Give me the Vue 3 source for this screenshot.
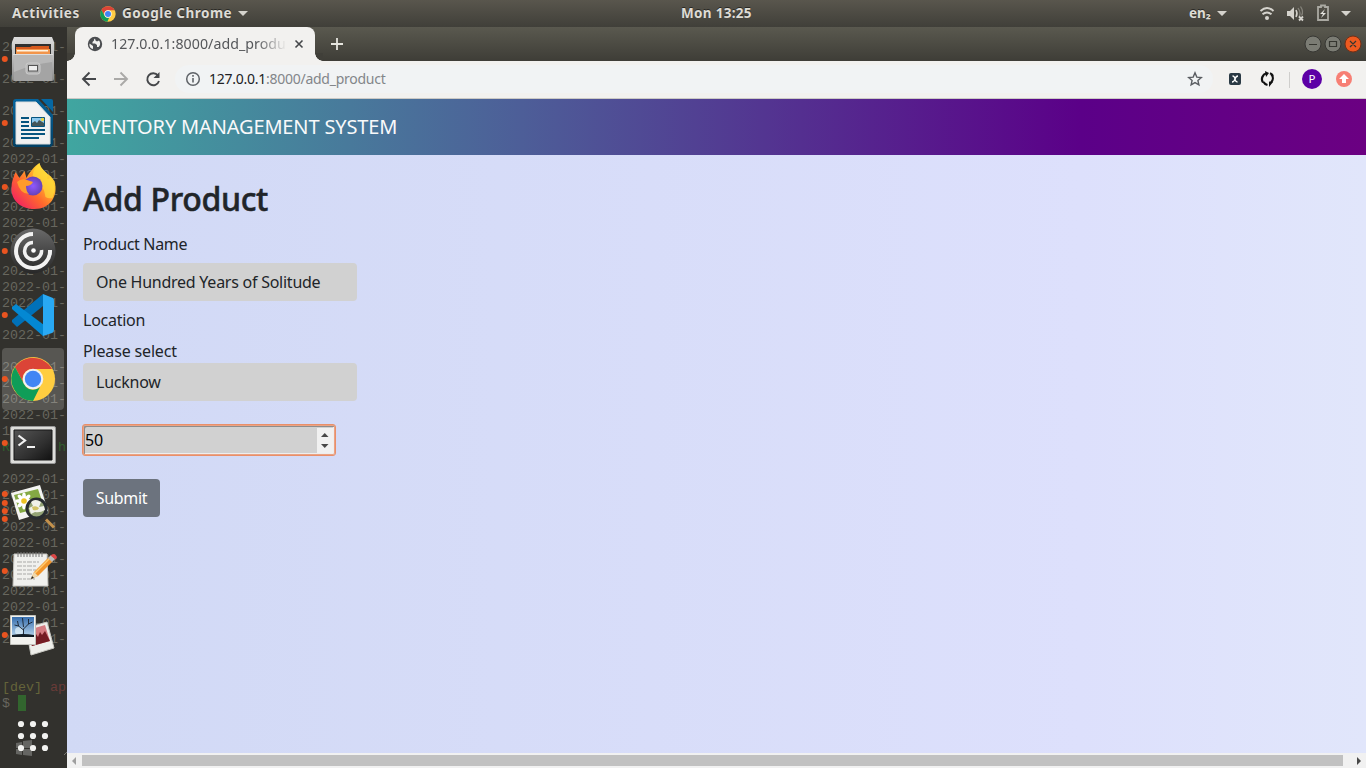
<script setup>
const lines = []
const blank = [63, 95, 127, 255, 319, 351, 463, 655, 671]
for (let y = 47; y <= 703; y += 16) {
  let text = '2022-01-'
  if (blank.includes(y)) text = ''
  if (y === 431) text = '1'
  if (y === 447) text = 'R      h'
  if (y === 703) text = '$ '
  lines.push({ y, text })
}
const dots = [59, 123, 187, 251, 315, 379, 443, 494, 503, 511, 519, 571, 635]
const grid = [0, 1, 2].flatMap(r => [0, 1, 2].map(c => ({ x: 21 + c * 12, y: 724 + r * 12 })))
const petals = [0, 45, 90, 135, 180, 225, 270, 315]
</script>

<template>
  <div class="desktop">
    <header class="topbar">
      <span class="activities">Activities</span>
      <svg class="mini" width="16" height="16" viewBox="0 0 48 48">
        <circle cx="24" cy="24" r="23" fill="#fc4" />
        <path d="M4 12A23 23 0 0 1 44 13H24A11 11 0 0 0 14 29Z" fill="#db4437" />
        <path d="M4 12L14 29A11 11 0 0 0 28 34L22 47A23 23 0 0 1 4 12Z" fill="#0f9d58" />
        <circle cx="24" cy="24" r="11" fill="#fff" /><circle cx="24" cy="24" r="9" fill="#4285f4" />
      </svg>
      <span class="appname">Google Chrome</span>
      <i class="caret"></i>
      <span class="clock">Mon 13:25</span>
      <span class="lang">en₂</span>
      <svg class="tray" width="140" height="27" viewBox="0 0 140 27">
        <g fill="#d5d3cd">
          <path d="M2 11h10l-5 5zM126 11h10l-5 5z" />
          <circle cx="52" cy="18" r="2" />
          <path d="M72 11h3l4-4v13l-4-4h-3z" />
        </g>
        <g fill="none" stroke="#d5d3cd" stroke-width="1.900">
          <path d="M45.500 11Q52 5 58.500 11M47.500 14.300Q52 10.500 56.500 14.300" />
          <path d="M81 10q2 3.500 0 7" stroke-width="1.500" />
          <path d="M83 8q3.500 5 1 9M85.500 6.500q3.500 5 1 9" stroke="#85837b" stroke-width="1.300" />
          <path d="M84 16.500l4 4m0-4l-4 4" stroke-width="1.800" />
          <path d="M106 7h-3v13h10V7h-3V5.500h-4z" stroke="#aaa9a2" stroke-width="1.800" />
        </g>
        <path d="M110 9l-5 5h3l-2 4 5-5h-3z" fill="#e5e4df" />
      </svg>
    </header>

    <div class="workspace">
      <aside class="dock">
        <pre class="terminal"><span v-for="l in lines" :key="l.y" :class="{ green: l.y === 447, dev: l.y === 687 }"><template v-if="l.y === 687">[dev] <b>ap</b></template><template v-else>{{ l.text }}<i v-if="l.y === 703" class="cursor"></i></template></span></pre>
        <svg class="launchers" width="67" height="741" viewBox="0 27 67 741">
          <defs>
            <linearGradient id="metal" x2="0" y2="1"><stop stop-color="#ddd" /><stop offset=".4" stop-color="#c1c1c1" /><stop offset="1" stop-color="#8c8c8c" /></linearGradient>
            <linearGradient id="fire" x1="1" x2="0" y2="1"><stop stop-color="#fff44f" /><stop offset=".3" stop-color="#ffc02c" /><stop offset=".58" stop-color="#ff6a2c" /><stop offset="1" stop-color="#ed0b72" /></linearGradient>
            <linearGradient id="citrix" x2="0" y2="1"><stop stop-color="#6a6a6a" /><stop offset=".55" stop-color="#444" /><stop offset="1" stop-color="#282828" /></linearGradient>
            <linearGradient id="screen" x2="1" y2="1"><stop stop-color="#555" /><stop offset=".6" stop-color="#303030" /><stop offset="1" stop-color="#111" /></linearGradient>
            <linearGradient id="writer" x2="0" y2="1"><stop stop-color="#06649d" /><stop offset="1" stop-color="#024064" /></linearGradient>
            <linearGradient id="sky" x2="0" y2="1"><stop stop-color="#376eae" /><stop offset="1" stop-color="#b8d6ed" /></linearGradient>
            <radialGradient id="violet"><stop stop-color="#9059ff" /><stop offset="1" stop-color="#6542b8" /></radialGradient>
          </defs>
          <rect x="2" y="348" width="62" height="62" rx="4" fill="#fff" fill-opacity=".18" />
          <circle v-for="y in dots" :key="y" cx="4.800" :cy="y" r="3" fill="#e95420" />

          <!-- files -->
          <path d="M14 37h38l2 5v37q0 2-2 2H14q-2 0-2-2V42z" fill="url(#metal)" />
          <path d="M15 44h36v12H15z" fill="#303030" />
          <path d="M16 47h14l2-1h17v9H16z" fill="#d65a1e" /><path d="M16 49h34v6H16z" fill="#f2954b" /><path d="M17 50h31v1.500H17z" fill="#fff2df" />
          <path d="M14 54h38v26q0 1-1 1H15q-1 0-1-1z" fill="#a4a4a4" /><path d="M14 54h38v8q-19 2-38 10z" fill="#b8b8b8" /><path d="M13 54.500h40" stroke="#ddd" />
          <rect x="26" y="63" width="14" height="11" rx="2.500" fill="#b4b4b4" stroke="#cdcdcd" />
          <rect x="28.500" y="65.500" width="9" height="5.500" fill="#eee" stroke="#555" />

          <!-- writer -->
          <path d="M13 102q0-3 3-3h22l15 16v28q0 4-4 4H16q-3 0-3-3z" fill="url(#writer)" />
          <path d="M41 99h10q2 0 2 2v11z" fill="#0667a2" />
          <path d="M16 102h20l14 15v27H16z" fill="#f1f1f1" stroke="#ddd" />
          <path d="M21 118h8M21 122h8M21 126h8M21 130h24M21 134h24M21 138h18" stroke="#06547f" stroke-width="2" />
          <path d="M31.500 117.500h13v9h-13z" fill="#8cc8ee" stroke="#06547f" /><path d="M32 126v-3l3-2 2 2 2-3 5 3v3z" fill="#44565a" /><circle cx="42.500" cy="119.500" r="1.700" fill="#ead340" />

          <!-- firefox -->
          <path d="M39.500 163c1 5 5 8 8 11 4 2 5 5 7 7 4 15-4 28-20 28-15 0-24-10-23-22 0-5 2-10 4-15l4 6 5-7 2 7c3-6 8-12 13-15z" fill="url(#fire)" />
          <path d="M39.500 163c1 5 5 8 8 11v5l3-1q7 8 2 20-4 1-7-1-1-12-12-17-3-9 6-17z" fill="#ffdd3a" opacity=".65" />
          <circle cx="33" cy="186" r="9.500" fill="url(#violet)" />
          <path d="M17 182q4-4 10-2l6 2q-2 4-7 4 0 5 3 8-9 0-12-12z" fill="#ff9b2b" />

          <!-- citrix -->
          <circle cx="33" cy="251" r="22.500" fill="url(#citrix)" />
          <g fill="none" stroke="#f2f2f2"><path d="M33 234A17 17 0 1 0 50 250" stroke-width="4" /><path d="M33 242.500A8.500 8.500 0 1 0 41.500 250" stroke-width="3.500" /></g><circle cx="33.500" cy="250.500" r="2.300" fill="#fff" />

          <!-- vscode -->
          <path d="M43 294v12L17 327l-5-5v-2z" fill="#0071b9" />
          <path d="M12 307l4-3 28 21-1 11-31-27z" fill="#0488d3" />
          <path d="M43 294l10 4q1 1 1 3v29q0 2-2 3l-9 3z" fill="#29a9f4" />

          <!-- chrome -->
          <circle cx="33" cy="379" r="22" fill="#ffcd40" />
          <path d="M15 367A22 22 0 0 1 52 369H33A10 10 0 0 0 24 384Z" fill="#db4437" />
          <path d="M15 367L24 384A10 10 0 0 0 40 387L33 401A22 22 0 0 1 15 367Z" fill="#0f9d58" />
          <circle cx="33" cy="379" r="10.300" fill="#f1f1f1" /><circle cx="33" cy="379" r="8.200" fill="#4285f4" />

          <!-- terminal -->
          <rect x="10.500" y="426.500" width="45" height="37" rx="1.500" fill="#dededb" stroke="#999" />
          <path d="M14 430h38v30H14z" fill="url(#screen)" stroke="#161616" />
          <path d="M18.500 435.500l6.500 5-6.500 5M27 447h8" fill="none" stroke="#f2f2f2" stroke-width="2.200" />

          <!-- viewer -->
          <path d="M11 493l29-8 8 26-29 9z" fill="#f4f4f2" />
          <path d="M14 495l24-6 6 18-24 6z" fill="#84a944" />
          <g fill="#fff"><ellipse v-for="a in petals" :key="a" cx="24" cy="496.500" rx="1.900" ry="4" :transform="`rotate(${a} 24 501)`" /></g><circle cx="24" cy="501" r="2.800" fill="#edc324" />
          <path d="M44 517l5 5" stroke="#35312b" stroke-width="4" /><path d="M46 519.500l8 8" stroke="#c5924c" stroke-width="3" />
          <circle cx="36.500" cy="508.500" r="9.500" fill="#93a375" stroke="#282c30" stroke-width="3" />
          <path d="M31 502q4-4 10 0l-2 5 5-1 1 4q-5 3-10 2l-4 2-2-6 4-2z" fill="#f0f1e9" /><path d="M32 507q4-2 7 1-1 3-6 2z" fill="#d2c365" />

          <!-- editor -->
          <path d="M14 554h33l1 32H13z" fill="#f0f0ed" stroke="#c6c5c0" />
          <path d="M17 562h22M17 566h19M17 570h22M17 574h15M17 579h18" stroke="#a9a9a7" stroke-dasharray="5 1 3 1" />
          <path d="M18 552v5M21 552v5M24 552v5M27 552v5M30 552v5M33 552v5M36 552v5M39 552v5M42 552v5" stroke="#777" />
          <path d="M31 579l3-7 15-15 4 4-15 15z" fill="#f2962c" /><path d="M35 573l15-15" stroke="#ffcb70" stroke-width="1.500" /><path d="M31 579l3-7 4 4z" fill="#eed8ad" /><path d="M31 579l1-3 2 2z" fill="#222" />
          <path d="M48 558l3-3 4 4-3 3z" fill="#bbb" /><path d="M50.500 555.500q3-3 5.500 0 2 2-.5 4z" fill="#dd4646" />

          <!-- photos -->
          <path d="M26 628l21-6 7 26-23 7z" fill="#eeeeea" stroke="#c8c8c2" />
          <path d="M28 630l17-5 5 16-18 5z" fill="#d57c82" /><path d="M29 640l4-4 2 2 1-4 2 3 2-5 2 3 3-4 5 10-18 5z" fill="#741c23" />
          <path d="M10.500 615.500h25v29h-25z" fill="#f2f2ee" stroke="#c2c2bc" /><path d="M12 617h22v20H12z" fill="url(#sky)" /><circle cx="19" cy="631" r="4" fill="#e4f3fb" opacity=".7" />
          <path d="M23.500 636v-7m0 1l-5-4-4-1m4 1l-1-5m6 8l5-5 4-2m-4 2v-5m-5 8l-1-9" stroke="#17202b" fill="none" stroke-width=".9" /><path d="M12 635q11-2 22 0v2H12z" fill="#111b24" />

          <!-- app grid -->
          <path d="M16 743l6-1v6h-6zM23 741l9-1v8h-9zM16 749h6v6l-6-1zM23 749h9v7l-9-1z" fill="#656562" />
          <path d="M64 755l3-3" stroke="#777670" />
          <circle v-for="(p, i) in grid" :key="i" :cx="p.x" :cy="p.y" r="3.100" fill="#f2f2f0" />
        </svg>
      </aside>

      <main class="window">
        <div class="tabs">
          <div class="tab">
            <svg width="16" height="16" viewBox="0 0 16 16"><circle cx="8" cy="8" r="7.200" fill="#4b4d50" /><path d="M2.500 7.500L6 10v3l-1.500-.5Q2 11 2.500 7.500zM8 2.500q-1.500 1-1 2L5.500 6v1.500H8L10 9v2h1.500l1-1q1.500-3-.5-5.500l-2 1L8.500 4.500z" fill="#f2f1ef" /></svg>
            <span class="tabtitle">127.0.0.1:8000/add_produ</span>
            <svg class="close" width="10" height="10" viewBox="0 0 10 10"><path d="M1.500 1.500l7 7m0-7l-7 7" stroke="#45474a" stroke-width="1.600" /></svg>
          </div>
          <svg class="plus" width="12" height="12" viewBox="0 0 12 12"><path d="M6 0v12M0 6h12" stroke="#e6e5df" stroke-width="1.800" /></svg>
          <svg class="controls" width="60" height="20" viewBox="0 0 60 20">
            <g fill="#7b7c74" stroke="#373733"><circle cx="10" cy="10" r="8" /><circle cx="30" cy="10" r="8" /><circle cx="50" cy="10" r="8" fill="#ee5a20" stroke="#732f16" /></g>
            <path d="M6 10.500h8M26.500 7.500h7v5h-7zM47 7l6 6m0-6l-6 6" fill="none" stroke="#353630" stroke-width="1.200" />
          </svg>
        </div>
        <div class="toolbar">
          <svg class="nav" width="94" height="38" viewBox="0 0 94 38" fill="none" stroke-width="1.900">
            <path d="M29 18H16m6.500-6.500L16 18l6.500 6.500" stroke="#45474a" />
            <path d="M47 18h13m-6.500-6.500L60 18l-6.500 6.500" stroke="#aaa9a7" />
            <path d="M91 14.500A6 6 0 1 0 92 20" stroke="#45474a" /><path d="M92.500 11v6h-6z" fill="#45474a" />
          </svg>
          <div class="address">
            <svg width="16" height="16" viewBox="0 0 16 16"><circle cx="8" cy="8" r="6.300" fill="none" stroke="#5f6368" stroke-width="1.500" /><path d="M8 7v4.500M8 4v1.700" stroke="#5f6368" stroke-width="1.600" /></svg>
            <span class="url"><b>127.0.0.1</b>:8000/add_product</span>
            <svg class="star" width="16" height="16" viewBox="0 0 16 16"><path d="M8 1.800l1.800 4.300 4.500.4-3.400 3 1 4.400L8 11.600l-3.900 2.300 1-4.400-3.400-3 4.500-.4z" fill="none" stroke="#5a5d62" stroke-width="1.400" /></svg>
          </div>
          <svg class="extensions" width="140" height="38" viewBox="0 0 140 38">
            <rect x="3" y="12" width="12" height="12" rx="2" fill="#2b3a45" />
            <path d="M6.500 15q2 0 2.500 3t2.500 3M12 15q-2 0-3 3t-3 3" fill="none" stroke="#fff" stroke-width="1.300" />
            <path d="M37 21.500A6 6 0 0 1 40.500 12.300M44 12.300A6 6 0 0 1 47 15M45 21.500A6 6 0 0 0 45.500 13.500M41.500 24A6 6 0 0 1 37.500 21" fill="none" stroke="#111" stroke-width="2.200" />
            <path d="M39 10l4 2-3 4zM43 26l4-5-4-.5z" fill="#111" />
            <path d="M63.500 11v16" stroke="#cfcecc" /><circle cx="86" cy="18" r="10" fill="#5d00a6" />
            <circle cx="118" cy="18" r="8" fill="#f77f74" /><path d="M118 13l5 5h-3v4h-4v-4h-3z" fill="#fff" />
            <text x="86" y="22" text-anchor="middle" fill="#fff" font-size="11.500">P</text>
          </svg>
        </div>
        <section class="page">
          <div class="brand"><span>INVENTORY MANAGEMENT SYSTEM</span></div>
          <form class="form" @submit.prevent>
            <h1><span>Add Product</span></h1>
            <label class="name">Product Name</label>
            <div class="field book">One Hundred Years of Solitude</div>
            <label class="location">Location</label>
            <label class="select">Please select</label>
            <div class="field city">Lucknow</div>
            <div class="number"><span>50</span><svg width="16" height="25" viewBox="0 0 16 25"><path d="M0 0h16v25H0z" fill="#f1f1f1" /><path d="M4 9h7.500L7.750 5zM4 16h7.500L7.750 20z" fill="#484848" /></svg></div>
            <button type="button">Submit</button>
          </form>
        </section>
        <div class="scrollbar"><i class="left"></i><div class="thumb"></div><i class="right"></i></div>
      </main>
    </div>
  </div>
</template>

<style>
body { margin: 0; overflow: hidden; }
</style>

<style scoped>
* { box-sizing: border-box; }
.desktop { width: 1366px; height: 768px; font-family: "Noto Sans", "Open Sans", sans-serif; color: #212529; overflow: hidden; }
.topbar { height: 27px; background: linear-gradient(#59564d, #403f39); color: #dedcd5; display: flex; align-items: center; position: relative; font-size: 13.500px; font-weight: 700; line-height: 27px; white-space: nowrap; text-shadow: 0 -1px #292925; letter-spacing: .5px; }
.activities { width: 68px; margin-left: 12px; }
.mini { margin-left: 20px; }
.appname { width: 110px; margin-left: 6px; }
.caret { border: 5px solid transparent; border-top-color: #d5d3cd; border-bottom: 0; margin-left: 6px; }
.clock { position: absolute; left: 681px; top: 0; letter-spacing: .3px; }
.lang { position: absolute; left: 1189px; top: 0; letter-spacing: 0; }
.tray { position: absolute; left: 1215px; top: 0; }
.workspace { display: flex; height: 741px; }
.dock { width: 67px; height: 741px; background: #32312d; position: relative; overflow: hidden; flex: none; }
.terminal { margin: 0; padding: 13px 0 0 2px; font: 13.330px/16px "Liberation Mono", monospace; color: #68675f; }
.terminal span { display: block; height: 16px; }
.terminal .green { color: #315d2e; }
.terminal .dev { color: #65643a; }
.dev b { color: #693b38; font-weight: 400; }
.cursor { display: inline-block; width: 8px; height: 16px; background: #32652e; vertical-align: top; margin-top: -1px; }
.launchers { position: absolute; left: 0; top: 0; }
.window { width: 1299px; height: 741px; display: flex; flex-direction: column; }
.tabs { height: 34px; background: linear-gradient(#5a594f, #3e3d37); display: flex; align-items: center; padding-left: 8px; flex: none; }
.tab { width: 240px; height: 34px; background: #f2f1ef; border-radius: 8px 8px 0 0; display: flex; align-items: center; padding-left: 12px; position: relative; }
.tab::before, .tab::after { content: ""; position: absolute; bottom: 0; width: 8px; height: 8px; }
.tab::before { left: -8px; background: radial-gradient(circle at 0 0, #403f39 7.500px, #f2f1ef 8px); }
.tab::after { right: -8px; background: radial-gradient(circle at 100% 0, #403f39 7.500px, #f2f1ef 8px); }
.tabtitle { width: 176px; margin: -2px 0 0 8px; font-size: 14.200px; letter-spacing: .05px; color: #55575a; white-space: nowrap; overflow: hidden; -webkit-mask-image: linear-gradient(90deg, #000 145px, transparent 176px); }
.close { margin-left: 7px; }
.plus { margin-left: 16px; }
.controls { margin-left: auto; margin-right: 3px; }
.toolbar { height: 38px; background: #f2f1ef; border-bottom: 1px solid #cbc9c5; display: flex; flex: none; }
.nav { flex: none; }
.address { margin: 4px 0 5px 14px; height: 28px; width: 1038px; border-radius: 14px; background: #f1f3f4; display: flex; align-items: center; padding-left: 10px; }
.url { margin: -2px 0 0 8px; font-size: 14px; letter-spacing: -.26px; color: #83868a; white-space: nowrap; }
.url b { font-weight: 400; color: #202124; }
.star { margin-left: auto; margin-right: 10px; }
.extensions { margin-left: 13px; flex: none; }
.page { flex: 1; background: linear-gradient(90deg, #d1d9f5, #dde0fc 78%, #e1e6fb); }
.brand { height: 56px; background: linear-gradient(90deg, #40a6a0, #4d5e98 35%, #5b0088 78%, #6b0082); color: #f8f9fa; font-size: 20px; letter-spacing: -.15px; line-height: 56px; white-space: nowrap; }
.form { padding: 24px 0 0 16px; display: flex; flex-direction: column; align-items: flex-start; font-size: 16px; letter-spacing: -.25px; }
h1 { margin: 0 0 8px; font-size: 32px; line-height: 39px; font-weight: 500; letter-spacing: -.35px; -webkit-text-stroke: .5px #212529; white-space: nowrap; }
label { line-height: 24px; height: 24px; white-space: nowrap; }
.name { margin-top: 6px; margin-bottom: 7px; letter-spacing: -.33px; }
.field { width: 274px; height: 38px; border-radius: 4px; background: #d1d1d1; padding: 0 13px; line-height: 38px; white-space: nowrap; }
.location { margin: 7px 0; }
.select { letter-spacing: -.16px; }
.number { width: 254px; height: 32px; margin: 23px 0 23px -1px; border: 1px solid #e98f69; outline: 1px solid #eba384; outline-offset: -2px; border-radius: 3px; background: #d1d1d1; display: flex; align-items: center; justify-content: space-between; padding: 0 2px; color: #000; box-shadow: inset 2px 2px #8d8d8d, inset -2px -2px #eee; line-height: 22px; }
.number span { margin-top: -1px; }
button { width: 77px; height: 38px; border: 0; border-radius: 4px; background: #6c737e; color: #fff; font: inherit; letter-spacing: -.3px; padding: 0; }
.scrollbar { height: 15px; background: #f1f1f1; display: flex; align-items: center; flex: none; }
.left { border: 4px solid transparent; border-left: 0; border-right-color: #9f9f9f; margin: 0 6px 0 5px; }
.thumb { height: 11px; width: 1261px; background: #c1c1c1; }
.right { border: 4px solid transparent; border-right: 0; border-left-color: #484848; margin-left: 14px; }
</style>
